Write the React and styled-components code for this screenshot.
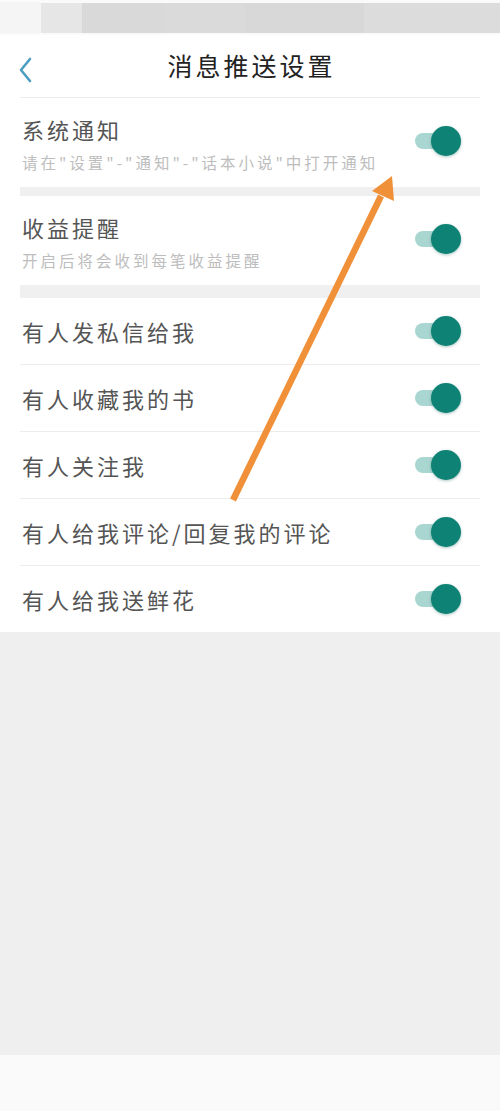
import React from "react";
import styled, { createGlobalStyle } from "styled-components";

const GlobalStyle = createGlobalStyle`
  html, body {
    margin: 0;
    padding: 0;
    background: #efefef;
  }
  body {
    font-family: "Noto Sans CJK SC", "Noto Sans", sans-serif;
  }
`;

const Page = styled.div`
  position: relative;
  width: 500px;
  height: 1111px;
  display: flex;
  flex-direction: column;
  background: #efefef;
  overflow: hidden;
`;

const StatusBar = styled.div`
  height: 35px;
  display: flex;
  background: #fafafa;
`;

const Mosaic = styled.div`
  flex: ${(p) => p.$grow || 1};
  margin: ${(p) => (p.$full ? "3px 0 2px" : "2px 0 2px")};
  background: ${(p) => p.$color};
`;

const Header = styled.div`
  height: 62px;
  background: #fff;
  display: flex;
  align-items: center;
  justify-content: center;
  position: relative;
`;

const Back = styled.div`
  position: absolute;
  left: 18px;
  top: 22px;
  width: 16px;
  height: 26px;
`;

const Title = styled.div`
  font-size: 25px;
  color: #222;
  letter-spacing: 3px;
  margin: -2px 0 0 3px;
`;

const Panel = styled.div`
  background: #fff;
  padding: 0 20px;
`;

const Line = styled.div`
  height: 1px;
  background: #ececec;
`;

const Band = styled.div`
  height: ${(p) => p.$h}px;
  background: #f0f0f0;
`;

const Row = styled.div`
  height: ${(p) => (p.$tall ? 89 : 66)}px;
  display: flex;
  align-items: center;
  justify-content: space-between;
  border-bottom: ${(p) => (p.$line ? "1px solid #ececec" : "none")};
`;

const Texts = styled.div`
  display: flex;
  flex-direction: column;
  padding-left: 2px;
`;

const Label = styled.div`
  font-size: 22px;
  color: #555;
  line-height: 30px;
  letter-spacing: 3px;
`;

const Sub = styled.div`
  font-size: 15.5px;
  color: #bdbdbd;
  line-height: 20px;
  margin-top: 8px;
  letter-spacing: 3px;
`;

const Toggle = styled.div`
  position: relative;
  width: 48px;
  height: 30px;
  margin-right: 19px;
  margin-top: ${(p) => (p.$shift ? "-4px" : "0")};
`;

const Track = styled.div`
  position: absolute;
  left: 2px;
  top: 7px;
  width: 38px;
  height: 16px;
  border-radius: 8px;
  background: #a9d6d1;
`;

const Knob = styled.div`
  position: absolute;
  right: 0;
  top: 0;
  width: 30px;
  height: 30px;
  border-radius: 50%;
  background: #0e8274;
  box-shadow: 0 1px 3px rgba(0, 90, 80, 0.35);
`;

const Filler = styled.div`
  flex: 1;
  background: #efefef;
`;

const Bottom = styled.div`
  height: 56px;
  background: #fafafa;
`;

const Arrow = styled.svg`
  position: absolute;
  left: 0;
  top: 0;
  pointer-events: none;
`;

const Switch = ({ shift }) => (
  <Toggle $shift={shift}>
    <Track />
    <Knob />
  </Toggle>
);

const simple = [
  "有人发私信给我",
  "有人收藏我的书",
  "有人关注我",
  "有人给我评论/回复我的评论",
  "有人给我送鲜花",
];

export default function App() {
  return (
    <Page>
      <GlobalStyle />
      <StatusBar>
        <Mosaic $grow={0.45} $color="#f5f5f5" />
        <Mosaic $grow={0.45} $color="#e6e6e6" $full />
        <Mosaic $grow={0.9} $color="#d9d9d9" $full />
        <Mosaic $grow={0.9} $color="#dadada" $full />
        <Mosaic $grow={1.3} $color="#d8d8d8" $full />
        <Mosaic $grow={1.5} $color="#dcdcdc" $full />
      </StatusBar>
      <Header>
        <Back>
          <svg width="16" height="26" viewBox="0 0 16 26">
            <path d="M12 2 L3 13 L12 24" fill="none" stroke="#4d9fc2" strokeWidth="2.6" strokeLinecap="round" strokeLinejoin="round" />
          </svg>
        </Back>
        <Title>消息推送设置</Title>
      </Header>
      <Panel>
        <Line />
        <Row $tall>
          <Texts>
            <Label>系统通知</Label>
            <Sub>请在"设置"-"通知"-"话本小说"中打开通知</Sub>
          </Texts>
          <Switch shift />
        </Row>
        <Band $h={9} />
        <Row $tall>
          <Texts>
            <Label>收益提醒</Label>
            <Sub>开启后将会收到每笔收益提醒</Sub>
          </Texts>
          <Switch shift />
        </Row>
        <Band $h={13} />
        {simple.map((t, i) => (
          <Row key={t} $line={i < simple.length - 1}>
            <Texts>
              <Label>{t}</Label>
            </Texts>
            <Switch />
          </Row>
        ))}
      </Panel>
      <Filler />
      <Bottom />
      <Arrow width="500" height="1111" viewBox="0 0 500 1111">
        <line x1="233" y1="500" x2="381" y2="196" stroke="#f0913a" strokeWidth="6.5" strokeLinecap="butt" />
        <polygon points="392,176 372,191 394,201" fill="#f0913a" />
      </Arrow>
    </Page>
  );
}
